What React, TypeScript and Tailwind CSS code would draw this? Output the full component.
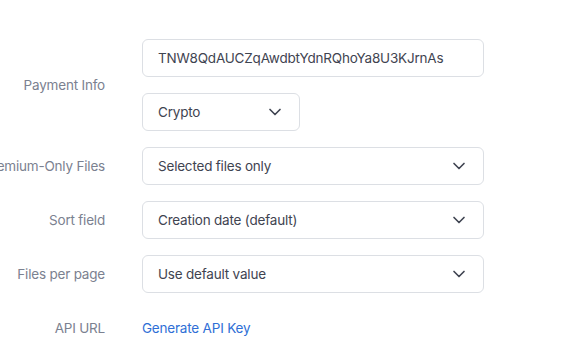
import { ChevronDown } from "lucide-react";

const Select: React.FC<{ value: string; className?: string }> = ({ value, className }) => (
  <div
    className={`h-[38px] flex items-center justify-between pl-[15px] pr-[14px] border border-[#dcdfe4] rounded-md bg-white text-[#3f4451] ${className ?? ""}`}
  >
    <span>{value}</span>
    <ChevronDown size={20} strokeWidth={2} className="text-[#3f4451]" />
  </div>
);

const Label: React.FC<{ text: string }> = ({ text }) => (
  <div className="flex justify-end items-center whitespace-nowrap text-[#7b8190]">{text}</div>
);

const App: React.FC = () => {
  return (
    <section
      className="w-[563px] h-[354px] bg-white pt-[39px] overflow-hidden text-[13.5px] tracking-[-0.2px]"
      style={{ fontFamily: "Inter, 'Noto Sans', sans-serif" }}
    >
      <div className="grid grid-cols-[105px_342px] gap-x-[37px] gap-y-4">
        <Label text="Payment Info" />
        <div className="flex flex-col gap-4">
          <div className="h-[38px] flex items-center px-[15px] border border-[#dcdfe4] rounded-md text-[#3f4451]">
            TNW8QdAUCZqAwdbtYdnRQhoYa8U3KJrnAs
          </div>
          <Select value="Crypto" className="w-[158px]" />
        </div>

        <Label text="Premium-Only Files" />
        <Select value="Selected files only" />

        <Label text="Sort field" />
        <Select value="Creation date (default)" />

        <Label text="Files per page" />
        <Select value="Use default value" />

        <Label text="API URL" />
        <div className="h-[38px] flex items-center">
          <a href="#" className="text-[#2f6fd6]">
            Generate API Key
          </a>
        </div>
      </div>
    </section>
  );
};

export default App;
